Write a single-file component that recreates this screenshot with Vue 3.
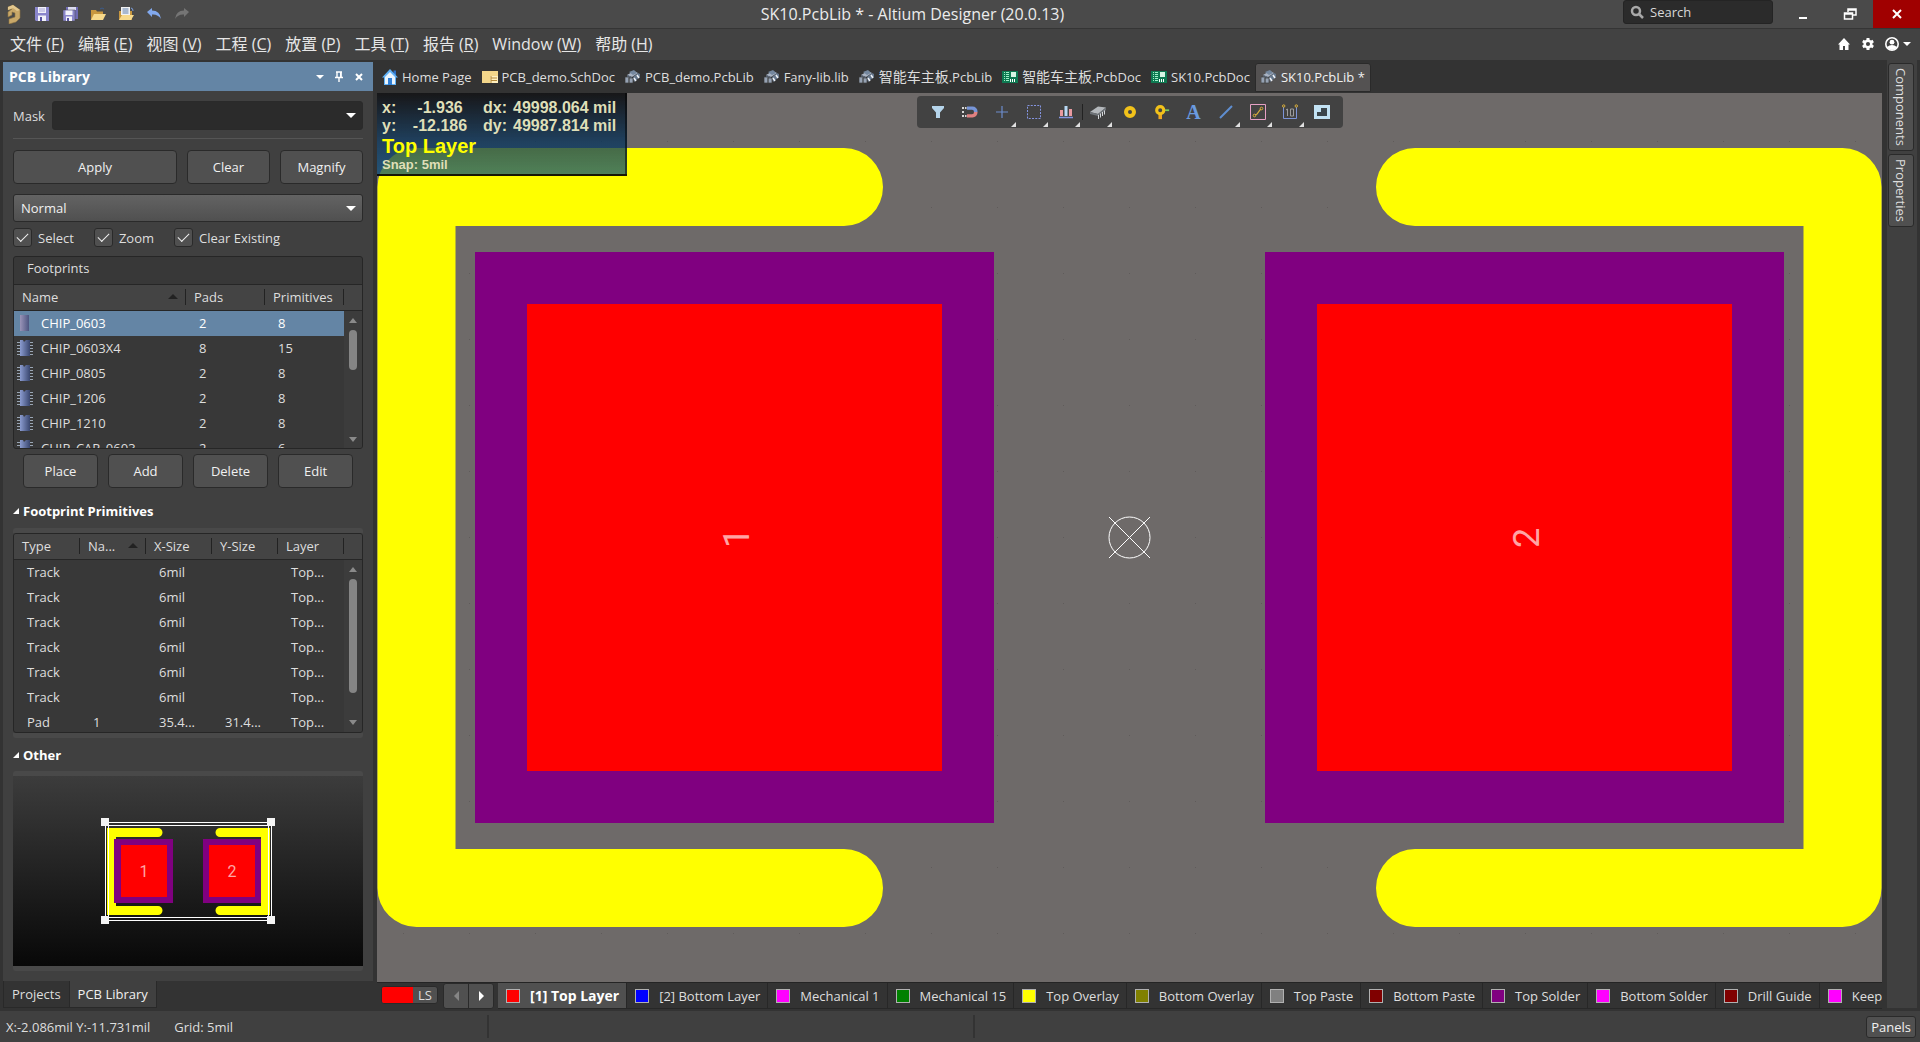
<script setup>
import { ref } from 'vue'

const menus = [
  ['文件', 'F'], ['编辑', 'E'], ['视图', 'V'], ['工程', 'C'], ['放置', 'P'],
  ['工具', 'T'], ['报告', 'R'], ['Window', 'W'], ['帮助', 'H'],
]
const quick = ['save', 'saveall', 'open', 'opendoc', 'undo', 'redo']
const docs = [
  { icon: 'homeblue', name: 'Home Page' },
  { icon: 'sch', name: 'PCB_demo.SchDoc' },
  { icon: 'lib', name: 'PCB_demo.PcbLib' },
  { icon: 'lib', name: 'Fany-lib.lib' },
  { icon: 'lib', zh: '智能车主板', name: '.PcbLib' },
  { icon: 'pcb', zh: '智能车主板', name: '.PcbDoc' },
  { icon: 'pcb', name: 'SK10.PcbDoc' },
  { icon: 'lib', name: 'SK10.PcbLib *', active: true },
]
const tools = [
  { icon: 'filter' }, { icon: 'magnet' }, { icon: 'cross', more: true },
  { icon: 'marquee', more: true }, { icon: 'align', more: true },
  { icon: 'chip', more: true, sep: true }, { icon: 'padring' }, { icon: 'via' },
  { icon: 'text' }, { icon: 'line', more: true }, { icon: 'track', more: true },
  { icon: 'dim', more: true }, { icon: 'region' },
]
const footprints = [
  ['CHIP_0603', 2, 8], ['CHIP_0603X4', 8, 15], ['CHIP_0805', 2, 8],
  ['CHIP_1206', 2, 8], ['CHIP_1210', 2, 8], ['CHIP_CAP_0603', 2, 6],
]
const track = ['Track', '', '6mil', '', 'Top...']
const primitives = [track, track, track, track, track, track, ['Pad', '1', '35.4...', '31.4...', 'Top...']]
const layers = [
  ['[1] Top Layer', '#ff0000'], ['[2] Bottom Layer', '#0000ff'], ['Mechanical 1', '#ff00ff'],
  ['Mechanical 15', '#008000'], ['Top Overlay', '#ffff00'], ['Bottom Overlay', '#808000'],
  ['Top Paste', '#808080'], ['Bottom Paste', '#800000'], ['Top Solder', '#800080'],
  ['Bottom Solder', '#ff00ff'], ['Drill Guide', '#800000'], ['Keep-Out Layer', '#ff00ff'],
]
const selected = ref(0)
const activeLayer = ref(0)
const opts = ref([
  { id: 'opt-select', label: 'Select', on: true },
  { id: 'opt-zoom', label: 'Zoom', on: true },
  { id: 'opt-clear', label: 'Clear Existing', on: true },
])
</script>

<template>
  <div class="app">
    <svg class="sprite" aria-hidden="true">
      <linearGradient id="g-chip" x1="0" x2="1"><stop offset="0" stop-color="#8b9cd0" /><stop offset="1" stop-color="#39466e" /></linearGradient>
      <linearGradient id="g-chip2" x1="0" x2="1"><stop offset="0" stop-color="#9a94b8" /><stop offset="1" stop-color="#4c5580" /></linearGradient>
      <symbol id="i-logo" viewBox="0 0 16 20"><path d="M2 3l5-2 7 5v8l-4 4-7 2v-5l6-2V9L6 8v3l-4 2V8l4-3-4 1z" fill="#c9a869" stroke="#8d7342" stroke-width=".6" /><path d="M2 3l5-2 7 5-3 1-4-3-5 2z" fill="#e3c88f" /></symbol>
      <symbol id="i-save" viewBox="0 0 16 16"><path d="M1 1h14v14H2l-1-1z" fill="#8a86cc" /><path d="M4 1h8v6H4zM4 9.500h8V15H4z" fill="#f2f2fa" /><path d="M5 3h6M5 5h6" stroke="#a9a6d8" /><path d="M6 11h2v4H6z" fill="#5652a0" /></symbol>
      <symbol id="i-saveall" viewBox="0 0 16 16"><path d="M4 1h12v12H4z" fill="#6f6bb4" /><path d="M6 1h8v3H6z" fill="#dcdcf0" /><path d="M1 4h12v11H1z" fill="#8a86cc" stroke="#4a4a4a" stroke-width=".5" /><path d="M3.500 4.500h7V9h-7zM4 10.500h6V15H4z" fill="#f2f2fa" /><path d="M5 12h2v3H5z" fill="#5652a0" /></symbol>
      <symbol id="i-open" viewBox="0 0 16 16"><path d="M1 4h5l1 1.500h6V14H1z" fill="#c8973f" /><path d="M4 8h12l-3 6H1z" fill="#f7d98b" /><path d="M10 3q2-2 4 0" stroke="#3c5c8c" fill="none" /></symbol>
      <symbol id="i-opendoc" viewBox="0 0 16 16"><path d="M1 5h13v9H1z" fill="#c8973f" /><path d="M3 1h9v8H3z" fill="#f2f2f2" /><path d="M4.500 3h6M4.500 5h6M4.500 7h6" stroke="#5f7fae" /><path d="M4 9h12l-3 5H1z" fill="#f7d98b" /><path d="M13 2q2 0 2 3" stroke="#7aa0e0" fill="none" /></symbol>
      <symbol id="i-undo" viewBox="0 0 16 16"><path d="M1 6l5-4v2.500q8 0 9 8.500-3-5-9-4.500V11z" fill="#82a9ee" /></symbol>
      <symbol id="i-redo" viewBox="0 0 16 16"><path d="M15 6l-5-4v2.500q-8 0-9 8.500 3-5 9-4.500V11z" fill="#757575" /></symbol>
      <symbol id="i-homeblue" viewBox="0 0 16 16"><path d="M11.500 1.500H14V6h-2.500z" fill="#2c6fc4" /><path d="M8 0L0 8.500h2V16h12V8.500h2z" fill="#5fb0f5" /><path d="M8 3L3 8v7h10V8z" fill="#e9f4fd" /><path d="M6 9h4v7H6z" fill="#2f7fd6" /></symbol>
      <symbol id="i-sch" viewBox="0 0 16 16"><path d="M0 2h16v12H0z" fill="#f3d68a" /><path d="M8 7h8v7H8z" fill="#fff0c0" /><path d="M9 9h6M9 11.500h6M9 7v7" stroke="#b58a3a" /></symbol>
      <symbol id="i-lib" viewBox="0 0 16 16"><path d="M2 6l7-4 4 2-6 4z" fill="#a9b4c4" /><path d="M4 3l5-2 3 3-4 2z" fill="#74879e" /><path d="M2 6l5 2v6l-5-2z" fill="#5f6c7e" /><path d="M0 8h4v6H0zM4 9h4v5H4z" fill="#96a2b3" stroke="#3c3c3c" stroke-width=".7" /><path d="M8 8l5-4 2 1v3l-6 5z" fill="#66778c" /><path d="M9 9l2 3M12 6l2 3" stroke="#eef2f7" stroke-width="1.500" /></symbol>
      <symbol id="i-pcb" viewBox="0 0 16 16"><path d="M0 2h16v12H0z" fill="#0e7a52" /><path d="M9 3h5v5H9z" fill="#d8f5e4" /><path d="M2 3.500h1M4 3.500h3M2 5.500h1M4 5.500h3M2 7.500h1M4 7.500h3M2 9.500h1M4 9.500h3M2 11.500h1M4 11.500h3" stroke="#9fefc8" /><path d="M8.500 10v3M10.500 10v3M12.500 10v3" stroke="#fff" /></symbol>
      <symbol id="i-filter" viewBox="0 0 16 16"><path d="M2 2h12v2L10 8.500V14H6V8.500L2 4z" fill="#b5d4ea" /></symbol>
      <symbol id="i-magnet" viewBox="0 0 16 16"><path d="M5 2.500h5a5 5 0 0 1 5.500 5.500H12q0-2.300-2-2.300H5z" fill="#7795d8" /><path d="M15.500 8a5 5 0 0 1-5.500 5.500H5v-3.200h5q2 0 2-2.300z" fill="#e08080" /><path d="M0 3h2v2H0zM0 7h2v2H0zM0 11h2v2H0zM3 3h1.500v2H3zM3 11h1.500v2H3z" fill="#d8d8d8" /></symbol>
      <symbol id="i-cross" viewBox="0 0 16 16"><path d="M8 2v12M2 8h12" stroke="#6c8ccc" stroke-width="1.200" /></symbol>
      <symbol id="i-marquee" viewBox="0 0 16 16"><path d="M1.500 1.500h13v13h-13z" fill="none" stroke="#8494e0" stroke-dasharray="2 1.250" /></symbol>
      <symbol id="i-align" viewBox="0 0 16 16"><path d="M2 6h3v6H2zM11 5h3v7h-3z" fill="#e99aa0" /><path d="M6.500 2h3v10h-3z" fill="#b8d8f4" /><path d="M1 13.500h14" stroke="#8494e0" stroke-width="1.500" /></symbol>
      <symbol id="i-chip" viewBox="0 0 16 16"><path d="M0 8l8-5.500 8 1L8 10z" fill="#b4b8bc" /><path d="M8 10l8-6.500V6l-8 6zM0 8l8 2v2L0 10z" fill="#6f7479" /><path d="M8.500 11v4M10.500 9.500v4M12.500 8v4M14.500 6.500v4" stroke="#d4d7da" /></symbol>
      <symbol id="i-padring" viewBox="0 0 16 16"><circle cx="8" cy="8" r="4" fill="#444" stroke="#f2c21a" stroke-width="4" /></symbol>
      <symbol id="i-via" viewBox="0 0 18 16"><path d="M7 8v8" stroke="#f0a81e" stroke-width="4" /><path d="M10 6h7" stroke="#78c85a" stroke-width="2" /><circle cx="7" cy="6" r="4" fill="#444" stroke="#f2c21a" stroke-width="3.500" /></symbol>
      <symbol id="i-line" viewBox="0 0 16 16"><path d="M2 14L14 2" stroke="#5f8ed0" stroke-width="2" /></symbol>
      <symbol id="i-track" viewBox="0 0 16 16"><path d="M.5.5h15v15H.5z" fill="none" stroke="#e6a0c4" /><path d="M5 11l2-1 3-4 1-1" stroke="#d8ae3c" stroke-width="1.200" fill="none" /><circle cx="4.500" cy="11.500" r="1.300" fill="none" stroke="#d8ae3c" /><circle cx="11.500" cy="4.500" r="1.300" fill="none" stroke="#d8ae3c" /></symbol>
      <symbol id="i-dim" viewBox="0 0 16 16"><path d="M1.500 3v11.500h13V3" fill="none" stroke="#7c94d8" /><circle cx="1.700" cy="2" r="1.200" fill="none" stroke="#d8ae3c" /><circle cx="14.300" cy="2" r="1.200" fill="none" stroke="#d8ae3c" /><path d="M4 6l1.500-1v7M8.500 5h3v7h-3z" fill="none" stroke="#9c9c9c" /></symbol>
      <symbol id="i-region" viewBox="0 0 16 16"><path d="M0 1h16v14H0z" fill="#c2e2f4" /><path d="M3 12V8h4V4h6v8z" fill="#3c464c" /></symbol>
      <symbol id="i-fp0" viewBox="0 0 16 16"><path d="M3 0h9v16H3z" fill="url(#g-chip2)" /></symbol>
      <symbol id="i-fp1" viewBox="0 0 16 16"><path d="M0 2.500h16M0 5.500h16M0 8.500h16M0 11.500h16M0 14.500h16" stroke="#9aa6b4" /><path d="M3 0h3l1 2 2-2h4v16H3z" fill="url(#g-chip)" /></symbol>
    </svg>

    <header class="titlebar">
      <div class="quick">
        <svg class="logo"><use href="#i-logo" /></svg>
        <button v-for="q in quick" :key="q" :aria-label="q"><svg class="i16"><use :href="'#i-' + q" /></svg></button>
      </div>
      <h1 class="title">SK10.PcbLib * - Altium Designer (20.0.13)</h1>
      <label class="search">
        <svg viewBox="0 0 14 14" class="i14"><circle cx="6" cy="6" r="4" fill="none" stroke="#a8a8a8" stroke-width="2.500" /><path d="M9 9l4 4" stroke="#a8a8a8" stroke-width="2.500" /></svg>
        <input type="text" placeholder="Search" aria-label="Search" />
      </label>
      <div class="winctl">
        <button aria-label="Minimize"><svg viewBox="0 0 14 14" class="i14"><path d="M3 11h8" stroke="#fff" stroke-width="2" /></svg></button>
        <button aria-label="Restore"><svg viewBox="0 0 14 14" class="i14"><path d="M5 5V2h8v6h-3M1.500 6h8v6h-8zM5 3h8M1.500 7h8" fill="none" stroke="#fff" stroke-width="1.500" /></svg></button>
        <button class="close" aria-label="Close"><svg viewBox="0 0 14 14" class="i14"><path d="M3 3l8 8M11 3l-8 8" stroke="#fff" stroke-width="2" /></svg></button>
      </div>
    </header>

    <nav class="menubar">
      <button v-for="m in menus" :key="m[1]">{{ m[0] }} (<u>{{ m[1] }}</u>)</button>
      <div class="account">
        <button aria-label="Home"><svg viewBox="0 0 14 14" class="i14"><path d="M7 1L1 7.500h1.500V13h3.500V9h2v4h3.500V7.500H13z" fill="#fff" /></svg></button>
        <button aria-label="Settings"><svg viewBox="0 0 14 14" class="i14"><path d="M7 1v12M1.800 4l10.400 6M12.200 4L1.800 10" stroke="#fff" stroke-width="3" /><circle cx="7" cy="7" r="3.300" fill="#424242" stroke="#fff" stroke-width="2.500" /></svg></button>
        <button aria-label="Account" class="user"><svg viewBox="0 0 14 14" class="i14"><circle cx="7" cy="7" r="6.200" fill="none" stroke="#fff" stroke-width="1.600" /><circle cx="7" cy="5.200" r="2.400" fill="#fff" /><path d="M2 10q5-4 10 0-5 6-10 0z" fill="#fff" /></svg><i class="caret small"></i></button>
      </div>
    </nav>

    <main class="work">
      <aside class="left">
        <section class="panel">
          <header class="panel-head">
            <h2>PCB Library</h2>
            <button aria-label="Panel menu"><i class="caret small"></i></button>
            <button aria-label="Pin"><svg viewBox="0 0 10 12" class="pin"><path d="M2 1h6M3 1v5M7 1v5M1 6.500h8M5 7v4" stroke="#fff" stroke-width="1.400" /><path d="M6 1h1.500v5H6z" fill="#fff" /></svg></button>
            <button aria-label="Close panel"><svg viewBox="0 0 10 12" class="pin"><path d="M2 3l6 6M8 3L2 9" stroke="#fff" stroke-width="2" /></svg></button>
          </header>
          <div class="panel-body">
            <div class="mask">
              <label for="mask">Mask</label>
              <div class="combo dark"><select id="mask"><option></option></select><i class="caret"></i></div>
            </div>
            <div class="actions">
              <button class="btn wide">Apply</button><button class="btn">Clear</button><button class="btn">Magnify</button>
            </div>
            <div class="combo mode"><select aria-label="Highlight mode"><option>Normal</option></select><i class="caret"></i></div>
            <div class="checks">
              <span v-for="o in opts" :key="o.id" class="check">
                <input :id="o.id" v-model="o.on" type="checkbox" /><label :for="o.id">{{ o.label }}</label>
              </span>
            </div>

            <div class="grid foot">
              <h3>Footprints</h3>
              <div class="scroller">
                <table>
                  <colgroup><col class="c-name" /><col class="c-pads" /><col class="c-prim" /><col /></colgroup>
                  <thead><tr><th>Name<i class="sort"></i></th><th>Pads</th><th>Primitives</th><th class="end"></th></tr></thead>
                  <tbody>
                    <tr v-for="(f, n) in footprints" :key="f[0]" :class="{ sel: n === selected }" @click="selected = n">
                      <td class="fname"><svg class="i16"><use :href="n ? '#i-fp1' : '#i-fp0'" /></svg>{{ f[0] }}</td>
                      <td>{{ f[1] }}</td><td>{{ f[2] }}</td><td class="end"></td>
                    </tr>
                  </tbody>
                </table>
                <div class="bar"><i class="up"></i><i class="thumb short"></i><i class="down"></i></div>
              </div>
            </div>
            <div class="edit">
              <button class="btn">Place</button><button class="btn">Add</button><button class="btn">Delete</button><button class="btn">Edit</button>
            </div>

            <h3 class="section"><i class="fold"></i>Footprint Primitives</h3>
            <div class="frame">
              <div class="grid prim">
                <div class="scroller">
                  <table>
                    <colgroup><col class="c-type" /><col class="c-size" /><col class="c-size" /><col class="c-size" /><col class="c-size" /><col /></colgroup>
                    <thead><tr><th>Type</th><th>Na...<i class="sort"></i></th><th>X-Size</th><th>Y-Size</th><th>Layer</th><th class="end"></th></tr></thead>
                    <tbody>
                      <tr v-for="(p, n) in primitives" :key="n"><td v-for="(c, k) in p" :key="k">{{ c }}</td><td class="end"></td></tr>
                    </tbody>
                  </table>
                  <div class="bar"><i class="up"></i><i class="thumb"></i><i class="down"></i></div>
                </div>
              </div>
            </div>

            <h3 class="section other"><i class="fold"></i>Other</h3>
            <div class="frame preview">
              <svg viewBox="0 0 350 190">
                <g fill="none" stroke="#ff0" stroke-width="9" stroke-linecap="round"><path d="M145 56.500H98.500V134.500H145" /><path d="M207 56.500H252.500V134.500H207" /></g>
                <path d="M101 63h59v64h-59zM190 63h58v64h-58z" fill="#800080" />
                <path d="M108 69h46v52h-46zM196 69h46v52h-46z" fill="#f00" />
                <g class="padno small-no"><text x="131" y="101">1</text><text x="219" y="101">2</text></g>
                <path d="M92.500 46.500h166v98h-166zM95.500 49.500h160v92h-160z" fill="none" stroke="#fff" />
                <path d="M88 42h8v8h-8zM254 42h8v8h-8zM88 140h8v8h-8zM254 140h8v8h-8z" fill="#f4f4f4" />
              </svg>
            </div>
          </div>
        </section>
        <nav class="panel-tabs"><button>Projects</button><button class="on">PCB Library</button></nav>
      </aside>

      <section class="center">
        <nav class="docs">
          <button v-for="(d, n) in docs" :key="n" :class="{ on: d.active }"><svg class="i16"><use :href="'#i-' + d.icon" /></svg><span><span v-if="d.zh" class="zh" lang="zh">{{ d.zh }}</span>{{ d.name }}</span></button>
        </nav>
        <div class="canvas">
          <svg class="board" viewBox="0 0 1505 889" preserveAspectRatio="xMidYMid slice">
            <pattern id="dots" x="752" y="444" width="66" height="66" patternUnits="userSpaceOnUse"><path d="M0 0h1v1H0z" fill="#5f5b5a" /></pattern>
            <path d="M0 0h1505v889H0z" fill="url(#dots)" />
            <g fill="none" stroke="#ff0" stroke-width="78" stroke-linecap="round" stroke-linejoin="round">
              <path d="M467 94H39.500V795H467" /><path d="M1038 94H1465.500V795H1038" />
            </g>
            <path d="M98 159h519v571H98zM888 159h519v571H888z" fill="#800080" />
            <path d="M150 211h415v467H150zM940 211h415v467H940z" fill="#f00" />
            <g class="padno">
              <text transform="translate(372 445) rotate(-90)">1</text>
              <text transform="translate(1162 445) rotate(-90)">2</text>
            </g>
            <g fill="none" stroke="#fff"><circle cx="752.500" cy="444.500" r="20.500" /><path d="M732 424l41 41M773 424l-41 41" /></g>
          </svg>
          <div class="hud">
            <dl>
              <dt>x:</dt><dd>-1.936</dd><dt>dx:</dt><dd>49998.064 mil</dd>
              <dt>y:</dt><dd>-12.186</dd><dt>dy:</dt><dd>49987.814 mil</dd>
            </dl>
            <strong>Top Layer</strong>
            <small>Snap: 5mil</small>
          </div>
          <div class="toolbar">
            <button v-for="t in tools" :key="t.icon" :class="{ more: t.more, sep: t.sep }" :aria-label="t.icon">
              <b v-if="t.icon === 'text'">A</b>
              <svg v-else class="i16"><use :href="'#i-' + t.icon" /></svg>
            </button>
          </div>
        </div>
        <nav class="layers">
          <button class="ls"><i></i><span>LS</span></button>
          <div class="step"><button aria-label="Previous layer" disabled><i class="prev"></i></button><button aria-label="Next layer"><i class="next"></i></button></div>
          <div class="layer-tabs">
            <button v-for="(l, n) in layers" :key="l[0]" :class="{ on: n === activeLayer }" @click="activeLayer = n"><i :style="{ background: l[1] }"></i>{{ l[0] }}</button>
          </div>
        </nav>
      </section>

      <aside class="rail"><div><button>Components</button><button>Properties</button></div></aside>
    </main>

    <footer class="status">
      <span class="coords">X:-2.086mil Y:-11.731mil</span><span class="snap">Grid: 5mil</span><span class="mid"></span>
      <button class="btn">Panels</button>
    </footer>
  </div>
</template>

<style>
body { margin: 0; background: #333; }
</style>

<style scoped>
* { box-sizing: border-box; }
.app { display: flex; flex-direction: column; height: 100vh; overflow: hidden; background: #333; color: #dedede; font: 13px/18px "Open Sans", "Noto Sans", "Noto Sans CJK SC", sans-serif; }
button, input, select { font: inherit; color: inherit; margin: 0; }
button { padding: 0; border: 0; background: none; white-space: nowrap; }
h1, h2, h3, dl, dd { margin: 0; }
h1, h2, h3 { font-weight: 400; font-size: inherit; }
svg { display: block; flex: none; }
.sprite { position: absolute; width: 0; height: 0; }
.i16 { width: 16px; height: 16px; }
.i14 { width: 14px; height: 14px; }
i { display: block; flex: none; font-style: normal; }
.caret { border: 5px solid transparent; border-top-color: #fff; border-bottom: 0; }
.caret.small { border-width: 4px; border-bottom: 0; }

.titlebar { display: flex; align-items: center; height: 29px; background: #4a4a4a; border-bottom: 1px solid #353535; flex: none; }
.quick { display: flex; align-items: center; gap: 12px; padding-left: 6px; }
.logo { width: 16px; height: 20px; }
.title { flex: 1; text-align: center; font-size: 16px; padding-left: 12px; color: #ececec; }
.search { display: flex; align-items: center; gap: 6px; width: 150px; height: 24px; padding: 0 6px; background: #2b2b2b; border: 1px solid #242424; border-radius: 3px; align-self: flex-start; }
.search input { width: 100%; min-width: 0; border: 0; background: none; padding: 0; outline: 0; }
.search input::placeholder { color: #d8d8d8; opacity: 1; }
.winctl { display: flex; align-self: stretch; padding-left: 6px; }
.winctl button { display: grid; place-items: center; width: 47px; }
.winctl .close { background: #a00000; }

.menubar { display: flex; align-items: center; gap: 14px; height: 31px; padding: 0 9px 2px 10px; background: #424242; font-size: 16px; color: #e6e6e6; flex: none; }
.account { display: flex; gap: 10px; margin-left: auto; }
.account .user { display: flex; align-items: center; gap: 4px; }

.work { display: flex; flex: 1; min-height: 0; }
.left { display: flex; flex-direction: column; width: 377px; padding: 2px 4px 3px 3px; flex: none; }
.panel { display: flex; flex-direction: column; flex: 1; min-height: 0; background: #404040; }
.panel-head { display: flex; align-items: center; gap: 10px; height: 29px; padding: 0 9px 0 6px; background: #6485a5; color: #fff; }
.panel-head h2 { flex: 1; font-size: 14px; font-weight: 700; }
.pin { width: 10px; height: 12px; }
.panel-body { display: flex; flex-direction: column; flex: 1; min-height: 0; padding: 10px; }
.mask { display: flex; align-items: center; gap: 7px; padding-bottom: 8px; border-bottom: 1px solid #555; }
.combo { position: relative; display: flex; border: 1px solid #2a2a2a; border-radius: 3px; }
.combo.dark { flex: 1; background: #2b2b2b; height: 29px; }
.combo.mode { height: 28px; background: linear-gradient(#636363, #505050); margin-top: 10px; flex: none; color: #f0f0f0; }
.combo select { appearance: none; width: 100%; border: 0; background: none; padding: 0 24px 0 7px; }
.combo .caret { position: absolute; right: 6px; top: 11px; pointer-events: none; }
.actions { display: flex; gap: 10px; margin-top: 11px; }
.btn { flex: 1; height: 34px; background: #505050; border: 1px solid #2a2a2a; border-radius: 4px; color: #f0f0f0; }
.btn.wide { flex: 2; }
.checks { display: flex; gap: 20px; margin-top: 6px; }
.check { display: flex; align-items: center; gap: 6px; }
.check input { appearance: none; display: grid; place-items: center; width: 19px; height: 19px; border: 1px solid #2a2a2a; border-radius: 3px; background: #505050; }
.check input:checked::after { content: ""; width: 10px; height: 5px; border: solid #f0f0f0; border-width: 0 0 1px 1px; rotate: -45deg; margin-bottom: 3px; }

.grid { position: relative; border: 1px solid #262626; border-radius: 3px; background: #383838; overflow: hidden; flex: none; }
.foot { height: 193px; margin-top: 9px; }
.foot h3 { padding: 2px 13px 6px; border-bottom: 1px solid #262626; height: 28px; }
.prim { height: 200px; }
.scroller { position: relative; }
table { width: 100%; table-layout: fixed; border-collapse: collapse; text-align: left; }
th, td { height: 25px; padding: 0 0 0 13px; font-weight: 400; white-space: nowrap; overflow: hidden; }
th { position: relative; padding-left: 8px; background: #444 linear-gradient(#222, #222) right center / 1px 16px no-repeat; border-bottom: 1px solid #262626; }
th.end { background-image: none; }
.end { padding: 0; width: 18px; }
.c-name { width: 172px; }
.c-pads { width: 79px; }
.c-prim { width: 79px; }
.c-type { width: 66px; }
.c-size { width: 66px; }
.fname { display: flex; align-items: center; gap: 8px; padding-left: 3px; }
.sel td { background: #6485a5; color: #fff; }
.sel td.end { background: none; }
.sort { position: absolute; right: 8px; top: 9px; border: 5px solid transparent; border-top: 0; border-bottom-color: #222; }
.bar { position: absolute; right: 0; top: 26px; width: 18px; display: flex; flex-direction: column; align-items: center; height: 138px; padding: 7px 0; gap: 7px; background: #3c3c3c; }
.prim .bar { height: 172px; }
.up { border: 4px solid transparent; border-top: 0; border-bottom: 5px solid #8a8a8a; }
.down { border: 4px solid transparent; border-bottom: 0; border-top: 5px solid #8a8a8a; margin-top: auto; }
.thumb { width: 8px; height: 114px; border-radius: 4px; background: #858585; }
.thumb.short { height: 40px; }
.edit { display: flex; gap: 10px; padding: 5px 10px 0; }
.section { display: flex; align-items: center; gap: 4px; height: 31px; padding-bottom: 3px; margin-top: 9px; color: #fff; font-weight: 700; flex: none; }
.fold { border-left: 6px solid transparent; border-bottom: 6px solid #fff; }
.frame { border: solid #494949; border-width: 5px 0; flex: none; border-radius: 3px; }
.section.other { height: 26px; padding-bottom: 0; margin-top: 4px; }
.preview { flex: 1; min-height: 0; margin-top: 3px; background: linear-gradient(#3c3c3c, #080808); }
.preview svg { width: 100%; height: 100%; }
.padno { fill: #ffa5a5; font-family: Roboto, "Liberation Sans", sans-serif; font-size: 36px; text-anchor: middle; }
.padno.small-no { font-size: 16px; }
.panel-tabs { display: flex; height: 27px; flex: none; }
.panel-tabs button { padding: 0 8px; border: 1px solid #292929; border-top: 0; }
.panel-tabs .on { background: #404040; color: #f0f0f0; border-left: 0; }

.center { display: flex; flex-direction: column; flex: 1; min-width: 0; }
.docs { display: flex; height: 33px; padding: 3px 0 1px; flex: none; }
.docs button { display: flex; align-items: center; gap: 4px; padding: 0 5px 2px; }
.docs .zh { font-size: 14px; }
.docs .on { background: #545252; border: 1px solid #2a2a2a; border-radius: 3px 3px 0 0; color: #f0f0f0; }
.canvas { position: relative; flex: 1; min-height: 0; background: #6e6a69; overflow: hidden; }
.board { width: 100%; height: 100%; }
.hud { position: absolute; left: 0; top: 0; width: 250px; padding: 6px 5px 2px; background: linear-gradient(rgba(8, 8, 10, .85), rgba(5, 50, 90, .75) 60%, rgba(5, 75, 125, .7)); border: solid rgba(0, 0, 0, .5); border-width: 0 2px 2px 0; font: 700 16px/18px "Liberation Sans", Arial, sans-serif; color: #dfdfb8; }
.hud dl { display: grid; grid-template-columns: 28px 60px 37px auto; white-space: nowrap; }
.hud dt:nth-of-type(even) { text-align: right; }
.hud dd:nth-of-type(odd) { text-align: center; }
.hud dd:nth-of-type(even) { padding-left: 6px; }
.hud strong { display: block; font-size: 20px; line-height: 22px; color: #ff0; }
.hud small { display: block; font-size: 13px; line-height: 15px; }
.toolbar { position: absolute; left: 50%; top: 3px; translate: -50% 0; display: flex; height: 32px; padding: 0 5px; background: #424242; border-radius: 4px; }
.toolbar button { position: relative; display: grid; place-items: center; width: 32px; }
.toolbar b { font: 700 20px/20px "Liberation Serif", serif; color: #6a9be0; }
.more::after { content: ""; position: absolute; right: 2px; bottom: 1px; border-left: 5px solid transparent; border-bottom: 5px solid #e0e0e0; }
.sep::before { content: ""; position: absolute; left: 0; top: 8px; width: 1px; height: 16px; background: #222; }

.layers { display: flex; height: 29px; border-top: 1px solid #242424; padding-left: 4px; flex: none; }
.ls { display: flex; width: 57px; height: 18px; margin-top: 3px; border: 1px solid #2a2a2a; border-radius: 3px; background: #505050; overflow: hidden; }
.ls i { width: 31px; height: 100%; background: #f00; }
.ls span { flex: 1; line-height: 16px; }
.step { display: flex; width: 51px; height: 26px; margin: 0 4px 0 5px; background: #505050; border: 1px solid #2a2a2a; border-radius: 3px; }
.step button { flex: 1; display: grid; place-items: center; }
.step button + button { border-left: 1px solid #2a2a2a; }
.prev { border: 5px solid transparent; border-left: 0; border-right-color: #858585; }
.next { border: 5px solid transparent; border-right: 0; border-left-color: #fff; }
.layer-tabs { display: flex; flex: 1; min-width: 0; overflow: hidden; height: 26px; }
.layer-tabs button { display: flex; align-items: center; gap: 10px; padding: 0 7px 0 8px; border: solid #272727; border-width: 0 1px 1px 0; flex: none; }
.layer-tabs i { width: 14px; height: 14px; border: 1px solid #b0b0b0; }
.layer-tabs .on { background: #505050; color: #fff; font-weight: 700; font-size: 14px; }

.rail { width: 38px; padding: 0 3px 3px 5px; flex: none; }
.rail div { height: 100%; background: #404040; display: flex; flex-direction: column; align-items: flex-start; gap: 3px; padding: 3px 1px; }
.rail button { writing-mode: vertical-rl; width: 26px; padding: 4px 0; background: #505050; border: 1px solid #2a2a2a; border-radius: 3px; }

.status { display: flex; align-items: center; height: 31px; padding: 0 4px 0 6px; background: #404040; flex: none; }
.snap { padding-left: 24px; }
.mid { width: 488px; height: 23px; border: solid #333; border-width: 0 2px; margin-left: 254px; }
.status .btn { flex: none; height: 22px; padding: 0 4px; margin-left: auto; border-radius: 3px; line-height: 18px; }
</style>
